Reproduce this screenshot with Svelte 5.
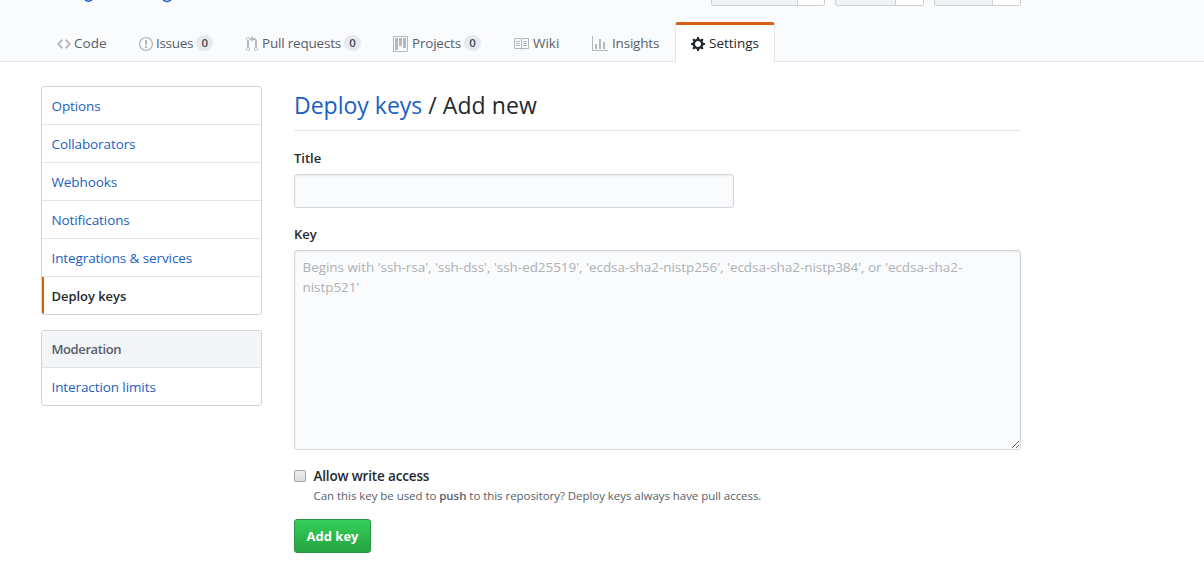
<script>
  const tabs = [
    { name: 'Code', width: 82, icon: 'code', vw: 14 },
    { name: 'Issues', width: 107, icon: 'issue', vw: 14, count: 0 },
    { name: 'Pull requests', width: 147, icon: 'pull', vw: 12, count: 0 },
    { name: 'Projects', width: 120, icon: 'project', vw: 15, count: 0 },
    { name: 'Wiki', width: 79, icon: 'book', vw: 16 },
    { name: 'Insights', width: 99, icon: 'graph', vw: 16 },
    { name: 'Settings', width: 100, icon: 'gear', vw: 14, selected: true }
  ];
  const icons = {
    code: 'M9.5 3L8 4.5 11.5 8 8 11.5 9.5 13 14 8 9.5 3zm-5 0L0 8l4.5 5L6 11.5 2.5 8 6 4.5 4.5 3z',
    issue: 'M7 2.3c3.14 0 5.7 2.56 5.7 5.7s-2.56 5.7-5.7 5.7A5.71 5.71 0 0 1 1.3 8c0-3.14 2.56-5.7 5.7-5.7zM7 1C3.14 1 0 4.14 0 8s3.14 7 7 7 7-3.14 7-7-3.14-7-7-7zm1 3H6v5h2V4zm0 6H6v2h2v-2z',
    pull: 'M11 11.28V5c-.03-.78-.34-1.47-.94-2.06C9.46 2.35 8.78 2.03 8 2H7V0L4 3l3 3V4h1c.27.02.48.11.69.31.21.2.3.42.31.69v6.28A1.993 1.993 0 0 0 10 15a1.993 1.993 0 0 0 1-3.72zm-1 2.92c-.66 0-1.2-.55-1.2-1.2 0-.65.55-1.2 1.2-1.2.65 0 1.2.55 1.2 1.2 0 .65-.55 1.2-1.2 1.2zM4 3c0-1.11-.89-2-2-2a1.993 1.993 0 0 0-1 3.72v6.56A1.993 1.993 0 0 0 2 15a1.993 1.993 0 0 0 1-3.72V4.72c.59-.34 1-.98 1-1.72zm-.8 10c0 .66-.55 1.2-1.2 1.2-.65 0-1.2-.55-1.2-1.2 0-.65.55-1.2 1.2-1.2.65 0 1.2.55 1.2 1.2zM2 4.2C1.34 4.2.8 3.65.8 3c0-.65.55-1.2 1.2-1.2.65 0 1.2.55 1.2 1.2 0 .65-.55 1.2-1.2 1.2z',
    project: 'M10 12h3V2h-3v10zm-4-2h3V2H6v8zm-4 4h3V2H2v12zm-1 1h13V1H1v14zM14 0H1a1 1 0 0 0-1 1v14a1 1 0 0 0 1 1h13a1 1 0 0 0 1-1V1a1 1 0 0 0-1-1z',
    book: 'M3 5h4v1H3V5zm0 3h4V7H3v1zm0 2h4V9H3v1zm11-5h-4v1h4V5zm0 2h-4v1h4V7zm0 2h-4v1h4V9zm2-6v9c0 .55-.45 1-1 1H9.5l-1 1-1-1H2c-.55 0-1-.45-1-1V3c0-.55.45-1 1-1h5.5l1 1 1-1H15c.55 0 1 .45 1 1zm-8 .5L7.5 3H2v9h6V3.5zm7-.5H9.5l-.5.5V12h6V3z',
    graph: 'M16 14v1H0V0h1v14h15zM5 13H3V8h2v5zm4 0H7V3h2v10zm4 0h-2V6h2v7z',
    gear: 'M14 8.77v-1.6l-1.94-.64-.45-1.09.88-1.84-1.13-1.13-1.81.91-1.09-.45-.69-1.92h-1.6l-.63 1.94-1.11.45-1.84-.88-1.13 1.13.91 1.81-.45 1.09L0 7.23v1.59l1.94.64.45 1.09-.88 1.84 1.13 1.13 1.81-.91 1.09.45.69 1.92h1.59l.63-1.94 1.11-.45 1.84.88 1.13-1.13-.92-1.81.47-1.09L14 8.75v.02zM7 11c-1.66 0-3-1.34-3-3s1.34-3 3-3 3 1.34 3 3-1.34 3-3 3z'
  };
  const actions = [
    { width: 114, count: 27 },
    { width: 89, count: 28 },
    { width: 87, count: 28 }
  ];
  const menu = ['Options', 'Collaborators', 'Webhooks', 'Notifications', 'Integrations & services', 'Deploy keys'];
  let title = $state('');
  let key = $state('');
  let write = $state(false);
</script>

<header>
  <div class="container head">
    <div class="repo-row">
      <div class="repo">
        <svg width="140" height="3" viewBox="0 0 140 3" aria-hidden="true">
          <path d="M44 0q3.500 2.400 7 0M122 0q4 3 8 0" fill="none" stroke="#1b5fc1" stroke-width="1.500" />
        </svg>
      </div>
      <div class="actions">
        {#each actions as a}
          <div class="action" style:width="{a.width}px"><span></span><b style:width="{a.count}px"></b></div>
        {/each}
      </div>
    </div>
    <nav class="tabs">
      {#each tabs as t}
        <a href="#top" class="tab" class:selected={t.selected} style:width="{t.width}px">
          <svg width={t.vw} height="16" viewBox="0 0 {t.vw} 16" aria-hidden="true"><path fill-rule="evenodd" d={icons[t.icon]} /></svg>
          <span class="label {t.icon}">{t.name}</span>
          {#if t.count !== undefined}<span class="counter">{t.count}</span>{/if}
        </a>
      {/each}
    </nav>
  </div>
</header>

<div class="container body">
  <aside>
    <nav class="menu">
      {#each menu as m}
        <a href="#top" class:current={m === 'Deploy keys'}>{m}</a>
      {/each}
    </nav>
    <nav class="menu">
      <h3>Moderation</h3>
      <a href="#top">Interaction limits</a>
    </nav>
  </aside>
  <main>
    <h2><a href="#top">Deploy keys</a> / Add new</h2>
    <label class="field" for="title">Title</label>
    <input id="title" class="text" type="text" bind:value={title} />
    <label class="field key" for="key">Key</label>
    <textarea id="key" bind:value={key} placeholder="Begins with 'ssh-rsa', 'ssh-dss', 'ssh-ed25519', 'ecdsa-sha2-nistp256', 'ecdsa-sha2-nistp384', or 'ecdsa-sha2-nistp521'"></textarea>
    <div class="check">
      <input id="write" type="checkbox" bind:checked={write} />
      <div>
        <label for="write">Allow write access</label>
        <p>Can this key be used to <strong>push</strong> to this repository? Deploy keys always have pull access.</p>
      </div>
    </div>
    <button>Add key</button>
  </main>
</div>

<style>
  :global(body) {
    margin: 0;
    background: #fff;
    color: #24292e;
    font: 13.5px/20px "Open Sans", "Noto Sans", sans-serif;
    overflow: hidden;
  }
  * { box-sizing: border-box; }
  a { color: #1b5fc1; text-decoration: none; }
  .container { width: 980px; margin-left: 41px; }
  header { height: 62px; background: #fafbfc; border-bottom: 1px solid #e1e4e8; }
  .repo-row { display: flex; justify-content: space-between; height: 22px; }
  .repo svg { display: block; }
  .actions { display: flex; gap: 10px; height: 6px; }
  .action {
    display: flex;
    border: 1px solid #cdd0d4;
    border-top: 0;
    border-radius: 0 0 3px 3px;
    background: #eff2f6;
    overflow: hidden;
  }
  .action span { flex: 1; }
  .action b { background: #fff; border-left: 1px solid #cdd0d4; }
  .tabs { display: flex; height: 40px; }
  .tab {
    display: flex;
    align-items: center;
    flex: none;
    padding: 3px 0 0 16px;
    color: #586069;
    white-space: nowrap;
    letter-spacing: -0.2px;
  }
  .label { margin-top: -1px; }
  .tab svg { fill: #b4b8bd; flex: none; margin-right: 4px; }
  .tab .code { margin-left: -1px; letter-spacing: 0.05px; }
  .tab .issue { margin-left: -1px; letter-spacing: -0.3px; }
  .tab .gear, .tab .book { letter-spacing: 0; }
  .tab.selected {
    padding: 0 0 0 15px;
    color: #24292e;
    background: #fff;
    border: 1px solid #e1e4e8;
    border-top: 3px solid #d26015;
    border-bottom: 0;
    border-radius: 3px 3px 0 0;
  }
  .tab.selected svg { fill: #24292e; }
  .counter {
    margin: -1px 0 0 3px;
    width: 17px;
    height: 16px;
    border-radius: 10px;
    background: #e6e9ed;
    color: #444d56;
    font-size: 11.5px;
    font-weight: 600;
    line-height: 16px;
    text-align: center;
  }
  .body { display: flex; gap: 32px; padding-top: 24px; }
  aside { width: 221px; flex: none; }
  .menu { margin-bottom: 15px; border: 1px solid #d1d5da; border-radius: 3px; overflow: hidden; }
  .menu a { display: block; height: 38px; padding: 9px 10px 8px 9.5px; border-bottom: 1px solid #e1e4e8; letter-spacing: -0.1px; }
  .menu a:last-child { height: 37px; border-bottom: 0; }
  .menu a.current {
    margin-left: -1px;
    padding-left: 7.5px;
    border-left: 3px solid #d26015;
    color: #24292e;
    font-size: 13px;
    font-weight: 600;
    letter-spacing: -0.05px;
  }
  .menu h3 {
    margin: 0;
    height: 37px;
    padding: 8px 10px 8px 9.5px;
    border-bottom: 1px solid #e1e4e8;
    background: #f3f5f8;
    color: #586069;
    font-size: 13px;
    font-weight: 600;
    letter-spacing: -0.4px;
  }
  main { width: 727px; }
  h2 {
    margin: 0 0 17px;
    height: 45px;
    padding-top: 1px;
    border-bottom: 1px solid #e1e4e8;
    font-size: 23px;
    font-weight: 400;
    line-height: 36px;
    letter-spacing: 0.06px;
  }
  h2 a { letter-spacing: 0; }
  .field { display: block; height: 26px; font-weight: 600; font-size: 13px; letter-spacing: 0; }
  .text, textarea {
    display: block;
    margin: 0;
    border: 1px solid #d1d5da;
    border-radius: 3px;
    background: #fafbfc;
    box-shadow: inset 0 1px 2px rgba(27, 31, 35, 0.075);
    font: inherit;
    outline: 0;
  }
  .text { width: 440px; height: 34px; }
  .key { margin-top: 16px; }
  textarea { width: 727px; height: 200px; padding: 6px 8px 6px 7.5px; letter-spacing: -0.05px; }
  textarea::placeholder { color: #aeb1b5; }
  .check { display: flex; margin-top: 16px; }
  .check input { width: 12px; height: 12px; margin: 4px 7.5px 0 0; appearance: none; border: 1px solid #a6a6a6; border-radius: 2px; background: linear-gradient(#eee, #dcdcdc); }
  .check label { display: block; font-weight: 600; letter-spacing: -0.16px; }
  .check p { margin: 0; color: #586069; font-size: 11.5px; line-height: 20px; letter-spacing: -0.05px; }
  strong { font-weight: 600; }
  button {
    display: block;
    width: 77px;
    height: 34px;
    margin-top: 13px;
    padding: 0;
    border: 1px solid #269443;
    border-radius: 3px;
    background: linear-gradient(#34d058, #28a745 90%);
    color: #fff;
    font: 700 13px/20px "Open Sans", "Noto Sans", sans-serif;
  }
</style>
